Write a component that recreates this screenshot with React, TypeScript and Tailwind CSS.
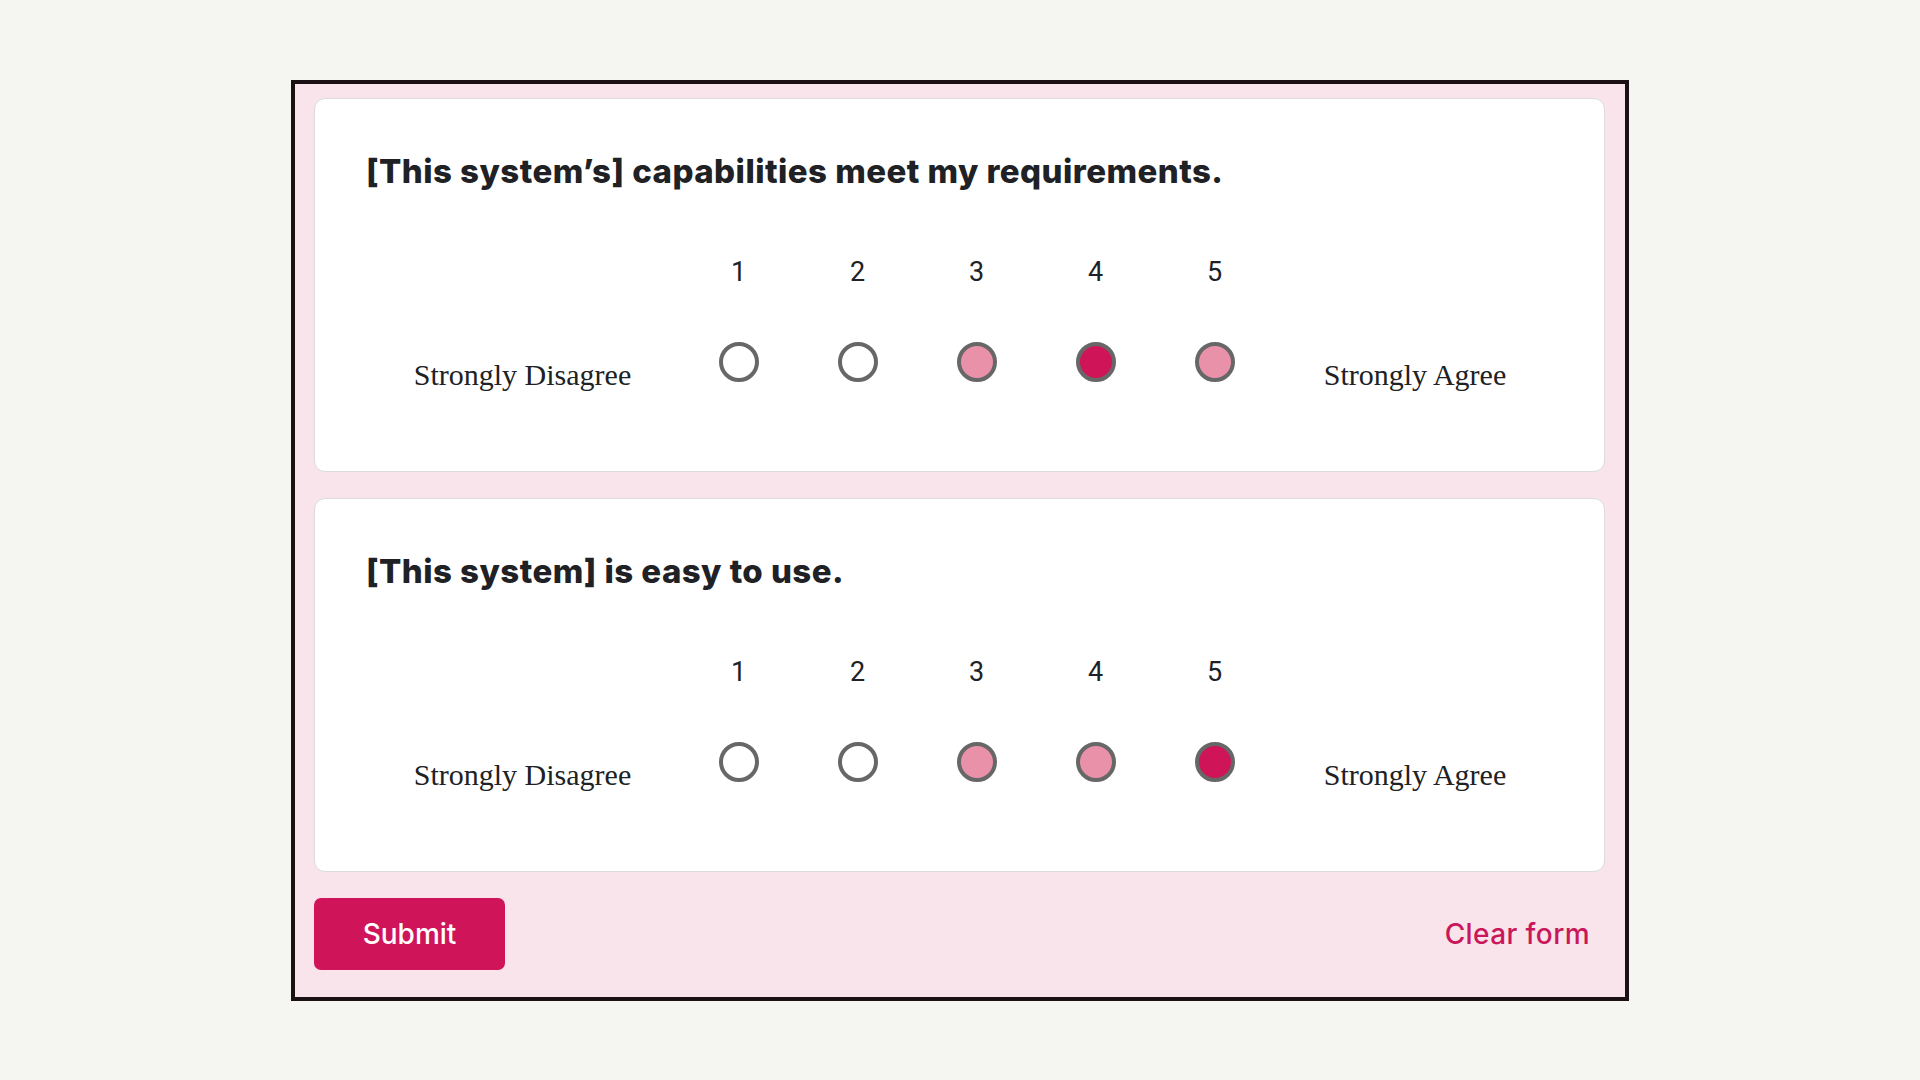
import React from 'react';

type Fill = 'empty' | 'light' | 'dark';

interface Question {
  title: string;
  answers: Fill[];
}

const QUESTIONS: Question[] = [
  {
    title: '[This system\u2019s] capabilities meet my requirements.',
    answers: ['empty', 'empty', 'light', 'dark', 'light'],
  },
  {
    title: '[This system] is easy to use.',
    answers: ['empty', 'empty', 'light', 'light', 'dark'],
  },
];

function Radio({ fill }: { fill: Fill }) {
  const bg =
    fill === 'dark' ? 'bg-[#cf1458]' : fill === 'light' ? 'bg-[#ea91aa]' : 'bg-white';
  return <div className={`w-[40px] h-[40px] rounded-full border-[4px] border-[#676767] ${bg}`} />;
}

function ScaleCard({ q }: { q: Question }) {
  return (
    <div className="h-[374px] bg-white rounded-[11px] border border-[#dcdcdc] pl-[51px] pt-[52px]">
      <h2 className="font-['Inter',sans-serif] font-extrabold tracking-[0.45px] text-[33px] leading-[40px] text-[#202124]">
        {q.title}
      </h2>

      <div className="flex mt-[66px]">
        {/* left label */}
        <div className="w-[313px] flex flex-col">
          <div className="h-[30px]" />
          <div className="mt-[68px] text-center font-['Liberation_Serif',serif] text-[30px] leading-[40px] text-[#202124]">
            Strongly Disagree
          </div>
        </div>

        {q.answers.map((fill, i) => (
          <div key={i} className="w-[119px] flex flex-col items-center">
            <div className="h-[30px] font-['Roboto',sans-serif] text-[27px] leading-[30px] text-[#202124]">
              {i + 1}
            </div>
            <div className="mt-[55px]">
              <Radio fill={fill} />
            </div>
          </div>
        ))}

        {/* right label */}
        <div className="w-[282px] flex flex-col">
          <div className="h-[30px]" />
          <div className="mt-[68px] text-center font-['Liberation_Serif',serif] text-[30px] leading-[40px] text-[#202124]">
            Strongly Agree
          </div>
        </div>
      </div>
    </div>
  );
}

export default function App() {
  return (
    <div className="w-[1920px] h-[1080px] bg-[#f5f5f1] pt-[80px] pl-[291px]">
      <div className="w-[1338px] h-[921px] border-4 border-[#1b1014] bg-[#f9e4eb] pt-[14px] pl-[19px] pr-[20px] flex flex-col">
        <div className="flex flex-col gap-[26px]">
          {QUESTIONS.map((q, i) => (
            <ScaleCard key={i} q={q} />
          ))}
        </div>

        <div className="mt-[26px] flex items-center justify-between">
          <button className="w-[191px] h-[72px] rounded-[7px] bg-[#d0145a] text-white font-['Inter',sans-serif] font-medium text-[28px]">
            Submit
          </button>
          <button className="mr-[15px] text-[#c9175b] font-['Inter',sans-serif] font-medium tracking-[0.4px] text-[28px]">
            Clear form
          </button>
        </div>
      </div>
    </div>
  );
}
